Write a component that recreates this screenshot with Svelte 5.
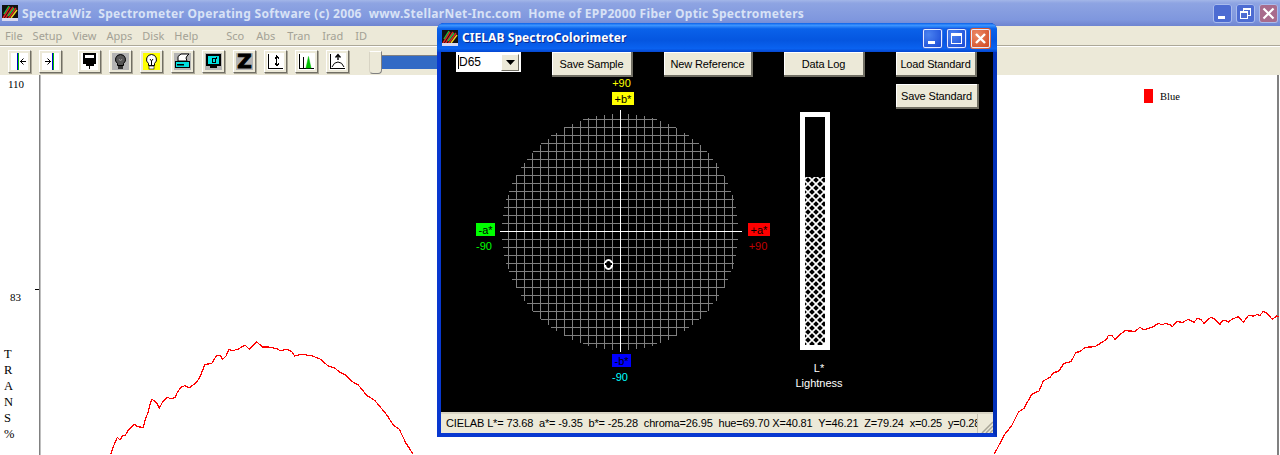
<script>
  // SpectraWiz main window with the CIELAB dialog floating on top of it
  const menuLeft = ["File", "Setup", "View", "Apps", "Disk", "Help"];
  const menuRight = ["Sco", "Abs", "Tran", "Irad", "ID"];
  const transLabel = ["T", "R", "A", "N", "S", "%"];

  // traced off the reference, page coordinates x3
  const leftTrace = [[332,553],[340,530],[352,502],[360,510],[367,498],[375,497],[385,480],[403,463],[412,470],[430,472],[437,445],[445,425],[451,400],[456,388],[470,398],[478,414],[490,392],[503,382],[513,387],[525,382],[533,365],[545,350],[555,347],[568,353],[590,337],[600,320],[615,283],[635,281],[650,256],[662,258],[668,268],[678,258],[687,238],[698,242],[715,237],[735,225],[748,238],[770,216],[788,231],[805,231],[830,236],[840,242],[862,238],[875,245],[884,258],[905,253],[935,257],[960,267],[985,288],[1005,295],[1020,307],[1035,314],[1055,334],[1075,345],[1100,376],[1125,392],[1160,434],[1180,465],[1198,478],[1218,520],[1240,553]];
  const rightTrace = [[13,522],[30,490],[45,462],[65,437],[85,397],[102,385],[125,343],[147,333],[160,303],[180,292],[192,277],[205,275],[222,250],[243,245],[258,217],[270,215],[285,202],[315,200],[350,178],[355,166],[365,166],[375,178],[388,165],[405,152],[435,154],[450,142],[462,150],[490,140],[505,130],[515,134],[525,131],[540,133],[547,140],[560,125],[578,127],[595,118],[612,127],[622,115],[632,118],[642,130],[662,112],[672,116],[690,133],[698,121],[708,121],[715,127],[725,118],[745,110],[760,127],[775,107],[790,108],[800,104],[810,106],[820,94],[830,100],[847,118],[860,108],[867,110]];

  const toPoints = (pts, ox, oy) =>
    pts.map(([x, y]) => `${(ox + x / 3).toFixed(1)},${(oy + y / 3).toFixed(1)}`).join(" ");

  const leftPoints = toPoints(leftTrace, 0, 270);
  const rightPoints = toPoints(rightTrace, 990, 280);

  // a*/b* wheel: 8px grid clipped to a circle
  const cx = 620;
  const cy = 231;
  const radius = 118;
  const gridLines = [];
  for (let k = -14; k <= 14; k++) {
    if (k === 0) continue;
    const d = k * 8;
    const span = Math.round(Math.sqrt(radius * radius - d * d));
    gridLines.push({ x1: cx - span, y1: cy + d, x2: cx + span, y2: cy + d });
    gridLines.push({ x1: cx + d, y1: cy - span, x2: cx + d, y2: cy + span });
  }
</script>

<div class="desktop">
  <div class="titlebar">
    <svg class="app-icon" viewBox="0 0 16 16" width="16" height="16">
      <rect width="16" height="16" fill="#111" />
      <path d="M1 13L8 2M3 14L11 2M6 14L14 3" stroke="#e02020" stroke-width="1.4" />
      <path d="M2 9L7 1M6 11L12 3" stroke="#20c040" stroke-width="1.4" />
      <path d="M9 13L15 5" stroke="#f0d020" stroke-width="1.4" />
      <rect y="13" width="16" height="3" fill="#d8d8f0" />
    </svg>
    <span class="app-title">SpectraWiz  Spectrometer Operating Software (c) 2006  www.StellarNet-Inc.com  Home of EPP2000 Fiber Optic Spectrometers</span>
    <div class="win-buttons">
      <div class="win-btn inactive">
        <svg viewBox="0 0 19 19" width="19" height="19"><rect x="5" y="12" width="7" height="3" fill="#fff" /></svg>
      </div>
      <div class="win-btn inactive">
        <svg viewBox="0 0 19 19" width="19" height="19" fill="none" stroke="#fff" shape-rendering="crispEdges"><path d="M7.500 7V4.500H14.500V11H12" /><rect x="4.500" y="7.500" width="7" height="7" /><path d="M4 8h8M7 5h8" /></svg>
      </div>
      <div class="win-btn inactive close">
        <svg viewBox="0 0 19 19" width="19" height="19"><path d="M4.500 4.500L14.500 14.500M14.500 4.500L4.500 14.500" stroke="#fff" stroke-width="2.200" /></svg>
      </div>
    </div>
  </div>

  <div class="menubar">
    {#each menuLeft as item}<span>{item}</span>{/each}
    <div class="menu-right">
      {#each menuRight as item}<span>{item}</span>{/each}
    </div>
  </div>

  <div class="toolbar">
    <div class="tool-group">
      <button class="tool">
        <svg viewBox="0 0 17 17" width="17" height="17" shape-rendering="crispEdges">
          <rect width="17" height="17" fill="#fff" />
          <rect x="6" width="1" height="17" fill="#00c" /><rect x="7" width="1" height="17" fill="#0b0" />
          <path d="M9 8.500H15M9.500 8.500l3-3M9.500 8.500l3 3" stroke="#000" fill="none" shape-rendering="auto" />
        </svg>
      </button>
      <button class="tool">
        <svg viewBox="0 0 17 17" width="17" height="17" shape-rendering="crispEdges">
          <rect width="17" height="17" fill="#fff" />
          <rect x="10" width="1" height="17" fill="#00c" /><rect x="11" width="1" height="17" fill="#0b0" />
          <path d="M3 8.500H9M8.500 8.500l-3-3M8.500 8.500l-3 3" stroke="#000" fill="none" shape-rendering="auto" />
        </svg>
      </button>
    </div>
    <div class="tool-group main-tools">
      <button class="tool">
        <svg viewBox="0 0 17 17" width="17" height="17" shape-rendering="crispEdges">
          <rect width="17" height="17" fill="#fff" />
          <rect x="2" y="0" width="13" height="11" fill="#000" />
          <rect x="4" y="2" width="9" height="3" fill="#fff" />
          <path d="M8 16V9M5 11h7v1H5zM6 10h5v1H6z" stroke="#000" />
        </svg>
      </button>
      <button class="tool">
        <svg viewBox="0 0 17 17" width="17" height="17">
          <rect width="17" height="17" fill="#b4b4b4" />
          <path d="M8.500 1.500a5 5 0 0 0-3 9v2h6v-2a5 5 0 0 0-3-9z" fill="#555" stroke="#000" />
          <rect x="6" y="13" width="5" height="3" fill="#333" />
          <path d="M7 6l1.500 2L10 6" stroke="#999" fill="none" />
        </svg>
      </button>
      <button class="tool">
        <svg viewBox="0 0 17 17" width="17" height="17">
          <rect width="17" height="17" fill="#ff0" />
          <path d="M8.500 1.500a5 5 0 0 0-3 9v2h6v-2a5 5 0 0 0-3-9z" fill="#fff" stroke="#000" />
          <rect x="6" y="13" width="5" height="3" fill="#fff" stroke="#000" stroke-width=".6" />
          <path d="M7 6l1.500 2L10 6M8.500 8v4" stroke="#000" fill="none" />
        </svg>
      </button>
      <button class="tool">
        <svg viewBox="0 0 17 17" width="17" height="17">
          <rect width="17" height="17" fill="#b4b4b4" />
          <path d="M4 8V3.500L7 1h8l-2 2-1 2 1 3z" fill="#fff" stroke="#000" />
          <rect x="1.500" y="8.500" width="14" height="6" fill="#00e0e0" stroke="#000" />
          <rect x="3" y="11" width="7" height="1.500" fill="#000" />
        </svg>
      </button>
      <button class="tool">
        <svg viewBox="0 0 17 17" width="17" height="17" shape-rendering="crispEdges">
          <rect width="17" height="17" fill="#b4b4b4" />
          <rect x="1" y="1" width="15" height="12" fill="#000" />
          <rect x="3" y="3" width="11" height="8" fill="#00e0e0" />
          <rect x="5" y="13" width="7" height="2" fill="#000" />
          <rect x="7" y="5" width="3" height="4" fill="none" stroke="#000" />
          <rect x="11" y="4" width="1" height="2" fill="#000" />
        </svg>
      </button>
      <button class="tool">
        <svg viewBox="0 0 17 17" width="17" height="17">
          <rect width="17" height="17" fill="#b4b4b4" />
          <text x="8.500" y="15" text-anchor="middle" class="zed">Z</text>
        </svg>
      </button>
      <button class="tool">
        <svg viewBox="0 0 17 17" width="17" height="17" fill="none" stroke="#000" shape-rendering="crispEdges">
          <rect width="17" height="17" fill="#fff" stroke="none" />
          <path d="M1.500 1V15.500H16" />
          <path d="M9.500 2V13M7.500 4h4M8.500 3h2M7.500 11h4M8.500 12h2" />
          <path d="M7.500 5h1M10.500 5h1M7.500 10h1M10.500 10h1" />
        </svg>
      </button>
      <button class="tool">
        <svg viewBox="0 0 17 17" width="17" height="17" fill="none" stroke="#000">
          <rect width="17" height="17" fill="#fff" stroke="none" />
          <path d="M1.500 1V15.500H16" shape-rendering="crispEdges" />
          <path d="M5.500 4V15" shape-rendering="crispEdges" />
          <path d="M8 15L10.500 3.500L13 15z" fill="#00c000" stroke="#00c000" stroke-width=".5" />
        </svg>
      </button>
      <button class="tool">
        <svg viewBox="0 0 17 17" width="17" height="17" fill="none" stroke="#000">
          <rect width="17" height="17" fill="#fff" stroke="none" />
          <path d="M1.500 1V15.500H16" shape-rendering="crispEdges" />
          <path d="M3 14Q5 9 9 9T15 14" />
          <path d="M9 7V1.500M6.500 4.500L9 1.500L11.500 4.500" stroke-width="1.400" />
        </svg>
      </button>
    </div>
    <div class="slider">
      <div class="slider-fill"></div>
      <div class="slider-thumb"></div>
    </div>
  </div>

  <svg class="graph" viewBox="0 75 1280 380" width="1280" height="380">
    <rect x="39" y="75" width="1.500" height="380" fill="#808080" />
    <rect x="1277" y="75" width="2" height="380" fill="#808080" />
    <rect x="35" y="289" width="4" height="1" fill="#000" />
    <text class="axis" x="8" y="88">110</text>
    <text class="axis" x="10" y="301">83</text>
    {#each transLabel as ch, i}
      <text class="axis trans" x="4" y={358 + i * 16}>{ch}</text>
    {/each}
    <rect x="1144" y="89" width="9" height="14" fill="#f00" />
    <text class="axis blue" x="1160" y="100">Blue</text>
    <polyline points={leftPoints} class="trace" />
    <polyline points={rightPoints} class="trace" />
  </svg>

  <div class="dialog">
    <div class="dlg-title">
      <svg class="app-icon" viewBox="0 0 16 16" width="16" height="16">
        <rect width="16" height="16" fill="#111" />
        <path d="M1 13L8 2M3 14L11 2M6 14L14 3" stroke="#e02020" stroke-width="1.400" />
        <path d="M2 9L7 1M6 11L12 3" stroke="#20c040" stroke-width="1.400" />
        <path d="M9 13L15 5" stroke="#f0d020" stroke-width="1.400" />
        <rect y="13" width="16" height="3" fill="#d8d8f0" />
      </svg>
      <span class="dlg-name">CIELAB SpectroColorimeter</span>
      <div class="win-buttons dlg-buttons">
        <div class="win-btn active">
          <svg viewBox="0 0 19 19" width="19" height="19"><rect x="5" y="12" width="7" height="3" fill="#fff" /></svg>
        </div>
        <div class="win-btn active">
          <svg viewBox="0 0 19 19" width="19" height="19" fill="none" stroke="#fff" shape-rendering="crispEdges"><rect x="4.500" y="4.500" width="10" height="10" /><path d="M4 5.500h11M4 6.500h11" /></svg>
        </div>
        <div class="win-btn active close">
          <svg viewBox="0 0 19 19" width="19" height="19"><path d="M5 5L14 14M14 5L5 14" stroke="#fff" stroke-width="2.400" /></svg>
        </div>
      </div>
    </div>

    <div class="dlg-body">
      <div class="col-wheel">
        <div class="top-row">
          <div class="combo">
            <span class="combo-value">D65</span>
            <span class="combo-arrow"><svg viewBox="0 0 9 5" width="9" height="5"><path d="M0 0H9L4.500 5z" fill="#000" /></svg></span>
          </div>
          <button class="push save-sample">Save Sample</button>
          <button class="push new-ref">New Reference</button>
        </div>
        <svg class="wheel" viewBox="441 76 343 310" width="343" height="310">
          <g stroke="#808080" shape-rendering="crispEdges">
            {#each gridLines as l}
              <line x1={l.x1} y1={l.y1 + 0.5} x2={l.x2} y2={l.y2 + 0.5} />
            {/each}
          </g>
          <g stroke="#fff" shape-rendering="crispEdges">
            <line x1="500" y1="231.500" x2="742" y2="231.500" />
            <line x1="620.500" y1="110" x2="620.500" y2="352" />
          </g>
          <g fill="none">
            <ellipse cx="608.500" cy="264.500" rx="3.500" ry="4.500" stroke="#fff" stroke-width="2.200" />
            <rect x="604" y="263" width="9" height="2" fill="#000" />
            <path d="M604.500 262v5M612.500 262v5" stroke="#fff" />
          </g>

          <text class="lbl" x="621.500" y="87" fill="#ff0">+90</text>
          <rect x="612" y="92" width="22" height="13" fill="#ff0" />
          <text class="lbl" x="623" y="103" fill="#000">+b*</text>

          <rect x="476" y="223" width="19" height="13" fill="#0f0" />
          <text class="lbl" x="485.500" y="234" fill="#000">-a*</text>
          <text class="lbl" x="484" y="250" fill="#0f0">-90</text>

          <rect x="748" y="223" width="22" height="13" fill="#f00" />
          <text class="lbl" x="759" y="234" fill="#000">+a*</text>
          <text class="lbl" x="758" y="250" fill="#c00000">+90</text>

          <rect x="612" y="354" width="19" height="13" fill="#00f" />
          <text class="lbl" x="621.500" y="365" fill="#000">-b*</text>
          <text class="lbl" x="620" y="381" fill="#0ff">-90</text>
        </svg>
      </div>

      <div class="col-bar">
        <button class="push data-log">Data Log</button>
        <svg class="lbar" viewBox="0 0 30 238" width="30" height="238">
          <defs>
            <pattern id="hatch" width="8" height="8" patternUnits="userSpaceOnUse">
              <path d="M0 0L8 8M8 0L0 8" stroke="#fff" stroke-width="1.600" />
            </pattern>
          </defs>
          <rect x="2.500" y="2.500" width="25" height="233" fill="#000" stroke="#fff" stroke-width="5" />
          <rect x="5" y="65" width="20" height="168" fill="url(#hatch)" />
        </svg>
        <div class="bar-label">L*<br />Lightness</div>
      </div>

      <div class="col-std">
        <button class="push load-std">Load Standard</button>
        <button class="push save-std">Save Standard</button>
      </div>
    </div>

    <div class="dlg-status">
      <div class="status-panel">CIELAB L*= 73.68  a*= -9.35  b*= -25.28  chroma=26.95  hue=69.70 X=40.81  Y=46.21  Z=79.24  x=0.25  y=0.28</div>
      <svg class="grip" viewBox="0 0 12 12" width="12" height="12">
        <path d="M1 12L12 1M5 12L12 5M9 12L12 9" stroke="#a8a596" stroke-width="1.500" />
      </svg>
    </div>
  </div>
</div>

<style>
  :global(body) {
    margin: 0;
    background: #fff;
  }
  .desktop {
    position: relative;
    width: 1280px;
    height: 455px;
    overflow: hidden;
    display: flex;
    flex-direction: column;
    font-family: "Noto Sans", sans-serif;
  }

  .titlebar {
    height: 26px;
    flex: none;
    display: flex;
    align-items: center;
    padding-left: 2px;
    box-sizing: border-box;
    background: linear-gradient(180deg, #a3b6e8 0, #8ea4e2 12%, #7f97de 75%, #6e84d0 100%);
  }
  .app-icon { flex: none; }
  .app-title {
    margin-left: 4px;
    white-space: pre;
    color: #d8e2f6;
    font-weight: 700;
    font-size: 12px;
    letter-spacing: 0.32px;
  }
  .win-buttons {
    margin-left: auto;
    margin-right: 2px;
    display: flex;
    gap: 4px;
  }
  .win-btn {
    width: 19px;
    height: 19px;
    border-radius: 3px;
  }
  .win-btn svg { display: block; }
  .win-btn.inactive {
    background: #4d6cd2;
    box-shadow: inset 0 0 0 1px #a9bbec;
  }
  .win-btn.inactive.close { background: #a86b8c; }
  .win-btn.active {
    background: radial-gradient(circle at 30% 30%, #4a82f0, #1f50d8 80%);
    box-shadow: inset 0 0 0 1px #e4ecff;
  }
  .win-btn.active.close {
    background: radial-gradient(circle at 30% 30%, #ec8a66, #d4502a 80%);
  }

  .menubar {
    height: 19px;
    flex: none;
    display: flex;
    align-items: center;
    padding-left: 5px;
    gap: 10px;
    background: #ece9d8;
    color: #a3a195;
    font-size: 11px;
  }
  .menu-right { display: flex; gap: 12px; margin-left: 18px; }

  .toolbar {
    height: 30px;
    flex: none;
    display: flex;
    align-items: center;
    box-sizing: border-box;
    padding: 2px 0 0 8px;
    background: #ece9d8;
    border-top: 1px solid #aca899;
    box-shadow: inset 0 1px 0 #fff;
  }
  .tool-group { display: flex; gap: 8px; }
  .main-tools { margin-left: 16px; }
  .tool {
    width: 23px;
    height: 23px;
    padding: 0;
    display: flex;
    align-items: center;
    justify-content: center;
    background: #ece9d8;
    border: 1px solid;
    border-color: #fff #716f64 #716f64 #fff;
    box-shadow: 1px 1px 0 #aca899;
  }
  .zed {
    font: 900 20px "DejaVu Sans", sans-serif;
    stroke: #000;
    stroke-width: 1px;
  }
  .slider {
    position: relative;
    margin-left: 20px;
    width: 100px;
    height: 22px;
    display: flex;
    align-items: center;
  }
  .slider-fill {
    height: 13px;
    width: 100%;
    background: #316ac5;
    border-top: 1px solid #808080;
  }
  .slider-thumb {
    position: absolute;
    left: 0;
    top: 0;
    width: 11px;
    height: 21px;
    background: #ece9d8;
    border: 1px solid;
    border-color: #fff #808080 #808080 #d8d4c4;
    border-radius: 0 0 4px 4px;
  }

  .graph { display: block; flex: none; }
  .axis {
    font: 11px "Liberation Serif", serif;
    fill: #000;
  }
  .trans { font-size: 12.5px; }
  .blue { font-size: 10.5px; }
  .trace {
    fill: none;
    stroke: #f00;
    stroke-width: 1.2;
    shape-rendering: crispEdges;
  }

  .dialog {
    position: absolute;
    left: 437px;
    top: 23px;
    width: 560px;
    height: 414px;
    box-sizing: border-box;
    display: flex;
    flex-direction: column;
    border-radius: 7px 7px 0 0;
    background: #0a3ed8;
    border: solid #0838d0;
    border-width: 0 4px 4px 4px;
    border-right-color: #0230b8;
  }
  .dlg-title {
    height: 29px;
    flex: none;
    margin: 0 -4px;
    padding-left: 5px;
    display: flex;
    align-items: center;
    border-radius: 7px 7px 0 0;
    background: linear-gradient(180deg, #0a5fe8 0, #3d95ff 8%, #0a62ea 20%, #0556e0 60%, #0a62f0 88%, #0446d0 100%);
  }
  .dlg-name {
    margin-left: 4px;
    color: #fff;
    font-weight: 700;
    font-size: 12px;
    letter-spacing: 0.08px;
    text-shadow: 1px 1px 0 #0a2a90;
  }
  .dlg-buttons { gap: 3px; margin-right: 6px; margin-top: 2px; }
  .dlg-buttons .win-btn { border: 1px solid transparent; }

  .dlg-body {
    flex: 1;
    min-height: 0;
    display: flex;
    background: #000;
  }
  .col-wheel { width: 343px; flex: none; }
  .top-row {
    height: 24px;
    display: flex;
    align-items: flex-start;
    padding: 0 0 0 15px;
  }
  .wheel { display: block; }

  .combo {
    width: 65px;
    height: 20px;
    box-sizing: border-box;
    display: flex;
    align-items: center;
    justify-content: space-between;
    background: #fff;
    padding: 0 2px;
    font: 12px "Liberation Sans", sans-serif;
    color: #000;
  }
  .combo-value { border-left: 1px solid #000; line-height: 14px; }
  .combo-arrow {
    width: 16px;
    height: 15px;
    display: flex;
    align-items: center;
    justify-content: center;
    background: #ece9d8;
    border: 1px solid;
    border-color: #fff #716f64 #716f64 #fff;
  }
  .push {
    box-sizing: border-box;
    height: 25px;
    padding: 0;
    background: #ece9d8;
    color: #000;
    font: 11px "Liberation Sans", sans-serif;
    letter-spacing: -0.15px;
    border: 0;
    border-right: 2px solid #716f64;
    border-bottom: 2px solid #716f64;
    box-shadow: inset 1px 1px 0 #fff;
    white-space: nowrap;
  }
  .save-sample { width: 81px; margin-left: 31px; }
  .new-ref { width: 89px; margin-left: 31px; }

  .col-bar { width: 81px; flex: none; }
  .data-log { width: 81px; display: block; }
  .lbar { display: block; margin: 35px 0 0 16px; }
  .bar-label {
    width: 70px;
    margin-top: 11px;
    text-align: center;
    color: #fff;
    font: 11px/15px "Liberation Sans", sans-serif;
  }

  .col-std {
    margin-left: 31px;
    display: flex;
    flex-direction: column;
    align-items: flex-start;
    gap: 7px;
  }
  .load-std { width: 81px; }
  .save-std { width: 83px; }

  .lbl {
    font: 11px "Liberation Sans", sans-serif;
    text-anchor: middle;
  }

  .dlg-status {
    height: 21px;
    flex: none;
    box-sizing: border-box;
    display: flex;
    align-items: stretch;
    background: #ece9d8;
    border-top: 2px solid #d8d4c4;
  }
  .status-panel {
    width: 537px;
    flex: none;
    overflow: hidden;
    white-space: pre;
    padding-left: 5px;
    box-sizing: border-box;
    font: 11px/19px "Liberation Sans", sans-serif;
    letter-spacing: -0.15px;
    color: #000;
    border-right: 1px solid #c8c5b4;
  }
  .grip { margin-left: auto; align-self: flex-end; }
</style>
